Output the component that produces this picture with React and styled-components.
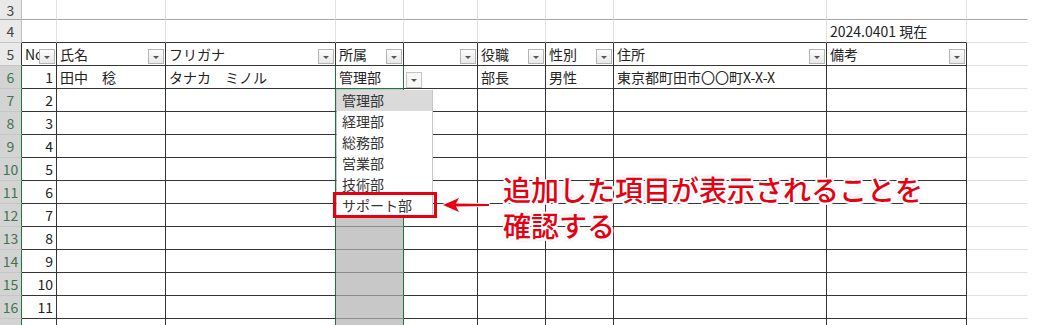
import React from 'react'
import styled, { createGlobalStyle, css } from 'styled-components'

const GlobalStyle = createGlobalStyle`
  html, body {
    margin: 0;
    padding: 0;
    background: #fff;
    overflow: hidden;
  }
  body {
    font-family: "Noto Sans CJK JP", "Noto Sans", sans-serif;
  }
`

// column widths: row header, A..J, then the blank strip past the sheet
const WIDTHS = [22, 35, 109, 170, 68, 74, 68, 68, 213, 140, 61, 12]

const GRID = '#e1e1e1'
const DARK = '#353535'
const GREEN = '#217346'
const RED = '#e50012'

const Sheet = styled.div`
  position: relative;
  width: 1040px;
  height: 325px;
  overflow: hidden;
`

const Grid = styled.div`
  display: grid;
  grid-template-columns: ${WIDTHS.map((w) => w + 'px').join(' ')};
  grid-template-rows: 20px repeat(14, 23px);
`

const RowHead = styled.div`
  box-sizing: border-box;
  display: flex;
  align-items: center;
  justify-content: center;
  font-size: 14px;
  background: ${({ $active }) => ($active ? '#d3d3d3' : '#e9e9e9')};
  color: ${({ $active }) => ($active ? '#3f7352' : '#444')};
  border-right: 1px solid ${({ $rc }) => $rc};
  border-bottom: 1px solid ${({ $bc }) => $bc};
`

const Cell = styled.div`
  position: relative;
  box-sizing: border-box;
  display: flex;
  align-items: center;
  justify-content: ${({ $right }) => ($right ? 'flex-end' : 'flex-start')};
  padding: 0 3px;
  overflow: hidden;
  white-space: nowrap;
  font-size: 14px;
  color: #222;
  background: ${({ $bg }) => $bg || '#fff'};
  border-right: 1px solid ${({ $rc }) => $rc};
  border-bottom: 1px solid ${({ $bc }) => $bc};
`

const dropButton = css`
  position: relative;
  box-sizing: border-box;
  width: 16px;
  height: 16px;
  border: 1px solid #b3b3b3;
  background: linear-gradient(#fcfcfc, #e8e8e8);

  &::after {
    content: '';
    position: absolute;
    left: 50%;
    top: 6px;
    margin-left: -3px;
    border-left: 3px solid transparent;
    border-right: 3px solid transparent;
    border-top: 3px solid #555;
  }
`

// filter buttons sit over the right end of each header cell
const FilterButton = styled.span`
  ${dropButton}
  position: absolute;
  right: 1px;
  bottom: 1px;
  height: 15px;
`

// data validation arrow next to the active cell
const ValidationButton = styled.span`
  ${dropButton}
  flex: none;
  margin: 6px 0 0 -1px;
  border-color: #c4c4c4;
  background: #f7f7f7;
`

const DropList = styled.ul`
  position: absolute;
  left: 337px;
  top: 90px;
  width: 96px;
  margin: 0;
  padding: 0;
  list-style: none;
  box-sizing: border-box;
  background: #fff;
  border-right: 1px solid #c6c6c6;
`

const DropItem = styled.li`
  height: 21px;
  line-height: 21px;
  padding-left: 5px;
  font-size: 14px;
  color: #333;
  background: ${({ $hover }) => ($hover ? '#dadada' : 'transparent')};
`

const HighlightBox = styled.div`
  position: absolute;
  left: 333px;
  top: 192px;
  width: 104px;
  height: 26px;
  box-sizing: border-box;
  border: 3px solid ${RED};
`

const Arrow = styled.svg`
  position: absolute;
  left: 439px;
  top: 195px;
`

const Callout = styled.div`
  position: absolute;
  left: 503px;
  top: 171px;
  font-size: 28px;
  font-weight: 500;
  line-height: 36px;
  color: ${RED};
  white-space: nowrap;
  text-shadow:
    2px 0 #fff, -2px 0 #fff, 0 2px #fff, 0 -2px #fff,
    1.5px 1.5px #fff, -1.5px 1.5px #fff, 1.5px -1.5px #fff, -1.5px -1.5px #fff,
    0 0 4px rgba(0, 0, 0, 0.45);
`

const HEADERS = ['No', '氏名', 'フリガナ', '所属', '', '役職', '性別', '住所', '備考']
const FIRST = ['1', '田中　稔', 'タナカ　ミノル', '管理部', '', '部長', '男性', '東京都町田市〇〇町X-X-X', '']
const DEPTS = ['管理部', '経理部', '総務部', '営業部', '技術部', 'サポート部']

const ROWS = Array.from({ length: 15 }, (_, i) => i + 3) // rows 3..17

const rightColor = (r, c) => {
  if (c === 11 || c === 10) return 'transparent'
  if (r >= 6 && (c === 3 || c === 4)) return GREEN
  if (r >= 5 && c <= 9) return DARK
  return GRID
}

const bottomColor = (r, c) => {
  if (c === 11) return 'transparent'
  if (r === 3) return '#a6a6a6'
  if (r === 6 && c === 4) return GREEN
  if (r >= 7 && c === 4) return '#8c8c8c'
  if (r >= 4 && c <= 9) return DARK
  return GRID
}

const cellText = (r, c) => {
  if (r === 4 && c === 9) return '2024.0401 現在'
  if (r === 5) return HEADERS[c - 1] || ''
  if (r === 6) return FIRST[c - 1] || ''
  if (r >= 7 && r <= 16 && c === 1) return String(r - 5)
  return ''
}

const App = () => (
  <Sheet>
    <GlobalStyle />
    <Grid>
      {ROWS.map((r) => (
        <React.Fragment key={r}>
          <RowHead
            $active={r >= 6}
            $rc={r >= 6 ? GREEN : r === 5 ? DARK : '#bdbdbd'}
            $bc={r === 3 ? '#a6a6a6' : '#c6c6c6'}
          >
            {r <= 16 ? r : ''}
          </RowHead>
          {WIDTHS.slice(1).map((_, i) => {
            const c = i + 1
            return (
              <Cell
                key={c}
                $right={c === 1 && r >= 6}
                $rc={rightColor(r, c)}
                $bc={bottomColor(r, c)}
                $bg={r >= 7 && c === 4 ? '#c8c8c8' : undefined}
              >
                {cellText(r, c)}
                {r === 5 && c <= 9 && <FilterButton />}
                {r === 6 && c === 5 && <ValidationButton />}
              </Cell>
            )
          })}
        </React.Fragment>
      ))}
    </Grid>

    <DropList>
      {DEPTS.map((d, i) => (
        <DropItem key={d} $hover={i === 0}>{d}</DropItem>
      ))}
    </DropList>

    <HighlightBox />

    <Arrow width="54" height="20" viewBox="0 0 54 20">
      <path
        d="M4 10 L20 3 L17 8.5 L50 9 L50 11 L17 11.5 L20 17 Z"
        fill={RED}
        stroke="#fff"
        strokeWidth="2"
        strokeLinejoin="round"
        paintOrder="stroke"
      />
    </Arrow>

    <Callout>
      追加した項目が表示されることを
      <br />
      確認する
    </Callout>
  </Sheet>
)

export default App
